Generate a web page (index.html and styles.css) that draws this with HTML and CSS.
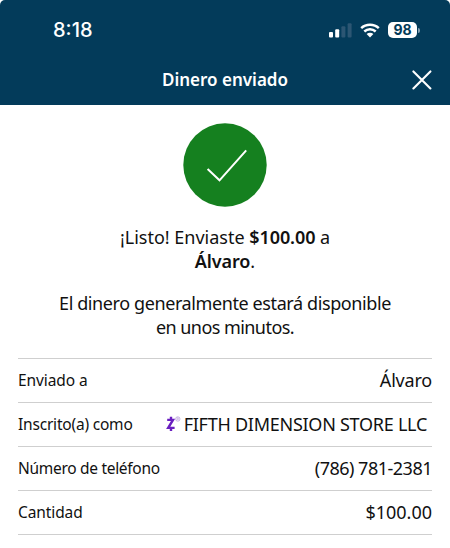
FILE: index.html
```
<!DOCTYPE html>
<html lang="es">
<head>
    <meta charset="UTF-8">
    <meta name="viewport" content="width=device-width, initial-scale=1.0">
    <title>Dinero enviado</title>
    <link rel="stylesheet" href="styles.css">
</head>
<body>

    <header class="header">
        <div class="status-bar">
            <span class="time">8:18</span>
            <div class="status-icons">
                <svg class="signal" width="23" height="15" viewBox="0 0 23 15">
                    <rect x="0" y="9" width="4" height="5.5" rx="1" fill="#fff"/>
                    <rect x="6.2" y="6.3" width="4" height="8.2" rx="1" fill="#fff"/>
                    <rect x="12.4" y="3.3" width="4" height="11.2" rx="1" fill="#2c5673"/>
                    <rect x="18.6" y="0.3" width="4" height="14.2" rx="1" fill="#2c5673"/>
                </svg>
                <svg class="wifi" width="20" height="15" viewBox="0 0 20 15">
                    <path d="M1.2 5.2C6 .7 14 .7 18.8 5.2M4.3 8.5C7.6 5.5 12.4 5.5 15.7 8.5" fill="none" stroke="#fff" stroke-width="2.5"/>
                    <path d="M10 14.4L6.6 11.1C8.5 9.4 11.5 9.4 13.4 11.1Z" fill="#fff"/>
                </svg>
                <span class="battery">98</span>
                <span class="battery-tip"></span>
            </div>
        </div>
        <div class="title-bar">
            <h1>Dinero enviado</h1>
            <svg class="close" width="20" height="20" viewBox="0 0 20 20">
                <path d="M1.4 1.4L18.4 18.4M18.4 1.4L1.4 18.4" stroke="#fff" stroke-width="2.1" stroke-linecap="round"/>
            </svg>
        </div>
    </header>

    <main class="content">
        <svg class="check" width="84" height="84" viewBox="0 0 84 84">
            <circle cx="42" cy="42" r="41.7" fill="#15801f"/>
            <path d="M24.6 46L36.5 57.3L63.2 27.3" fill="none" stroke="#fff" stroke-width="2"/>
        </svg>

        <p class="message">¡Listo! Enviaste <b>$100.00</b> a<br><b>Álvaro</b>.</p>
        <p class="message note">El dinero generalmente estará disponible<br><span class="line-time">en unos minutos.</span></p>

        <dl class="details">
            <div class="row">
                <dt>Enviado a</dt>
                <dd class="name">Álvaro</dd>
            </div>
            <div class="row">
                <dt class="enrolled-label">Inscrito(a) como</dt>
                <dd class="store">
                    <svg class="zelle" width="16" height="16" viewBox="0 0 16 16">
                        <path d="M1.2 3.9H7L2.2 11.9H8.6M5 .8V4M5 12V15" fill="none" stroke="#6a1fc0" stroke-width="2.4"/>
                        <circle cx="11.8" cy="3" r="2.2" fill="none" stroke="#b394d8" stroke-width=".7"/>
                        <path d="M11.1 4.3V1.8H12C12.9 1.8 12.9 3 12 3H11.1M12 3L12.7 4.3" fill="none" stroke="#b394d8" stroke-width=".5"/>
                    </svg>
                    <span>FIFTH DIMENSION STORE LLC</span>
                </dd>
            </div>
            <div class="row">
                <dt class="phone-label">Número de teléfono</dt>
                <dd class="phone">(786) 781-2381</dd>
            </div>
            <div class="row">
                <dt>Cantidad</dt>
                <dd>$100.00</dd>
            </div>
        </dl>
    </main>

</body>
</html>
```
FILE: styles.css
```
* {
    box-sizing: border-box;
}
body {
    margin: 0;
    height: 548px;
    overflow: hidden;
    background-color: #fff;
    color: #111;
    font-family: "Noto Sans", sans-serif;
    white-space: nowrap;
}
.header {
    height: 105px;
    background-color: #033b5a;
    border-radius: 5px 5px 0 0;
    color: #fff;
}
.status-bar {
    display: flex;
    justify-content: space-between;
    align-items: center;
    height: 60px;
    padding: 0 30px 0 53px;
}
.time {
    font-family: Inter, sans-serif;
    font-size: 20px;
    font-weight: 500;
}
.status-icons {
    display: flex;
    align-items: center;
}
.wifi {
    margin: 0 8px;
}
.battery {
    width: 29px;
    height: 16px;
    border-radius: 5px;
    background-color: #fff;
    color: #033b5a;
    font-family: Inter, sans-serif;
    font-size: 14px;
    font-weight: 700;
    line-height: 16px;
    text-align: center;
}
.battery-tip {
    width: 2px;
    height: 5px;
    margin-left: 1px;
    border-radius: 0 2px 2px 0;
    background-color: #7f9bad;
}
.title-bar {
    display: grid;
    grid-template-columns: 1fr auto 1fr;
    align-items: center;
    height: 39px;
    padding: 0 18px;
}
h1 {
    grid-column: 2;
    margin: 0;
    font-size: 17px;
    font-weight: 600;
}
.close {
    justify-self: end;
}
.content {
    padding: 18px 18px 0;
}
.check {
    display: block;
    margin: 0 auto;
}
.message {
    margin: 18px 0 0;
    font-size: 18px;
    line-height: 24px;
    text-align: center;
}
.message b {
    font-weight: 600;
    letter-spacing: -0.1px;
}
.note {
    letter-spacing: -0.4px;
}
.line-time {
    letter-spacing: -0.55px;
}
.details {
    margin: 19px 0 0;
    border-top: 1px solid #cfcfcf;
}
.row {
    display: flex;
    justify-content: space-between;
    align-items: center;
    height: 44px;
    padding-bottom: 2px;
    border-bottom: 1px solid #cfcfcf;
}
dt {
    font-size: 15.5px;
    letter-spacing: -0.1px;
}
dd {
    margin: 0;
    font-size: 18px;
}
.name {
    letter-spacing: -0.2px;
}
.enrolled-label {
    letter-spacing: -0.2px;
}
.phone-label {
    letter-spacing: -0.3px;
}
.phone {
    letter-spacing: -0.5px;
}
.store {
    display: flex;
    align-items: center;
    gap: 2px;
    padding-right: 5px;
    letter-spacing: -0.26px;
}
```
